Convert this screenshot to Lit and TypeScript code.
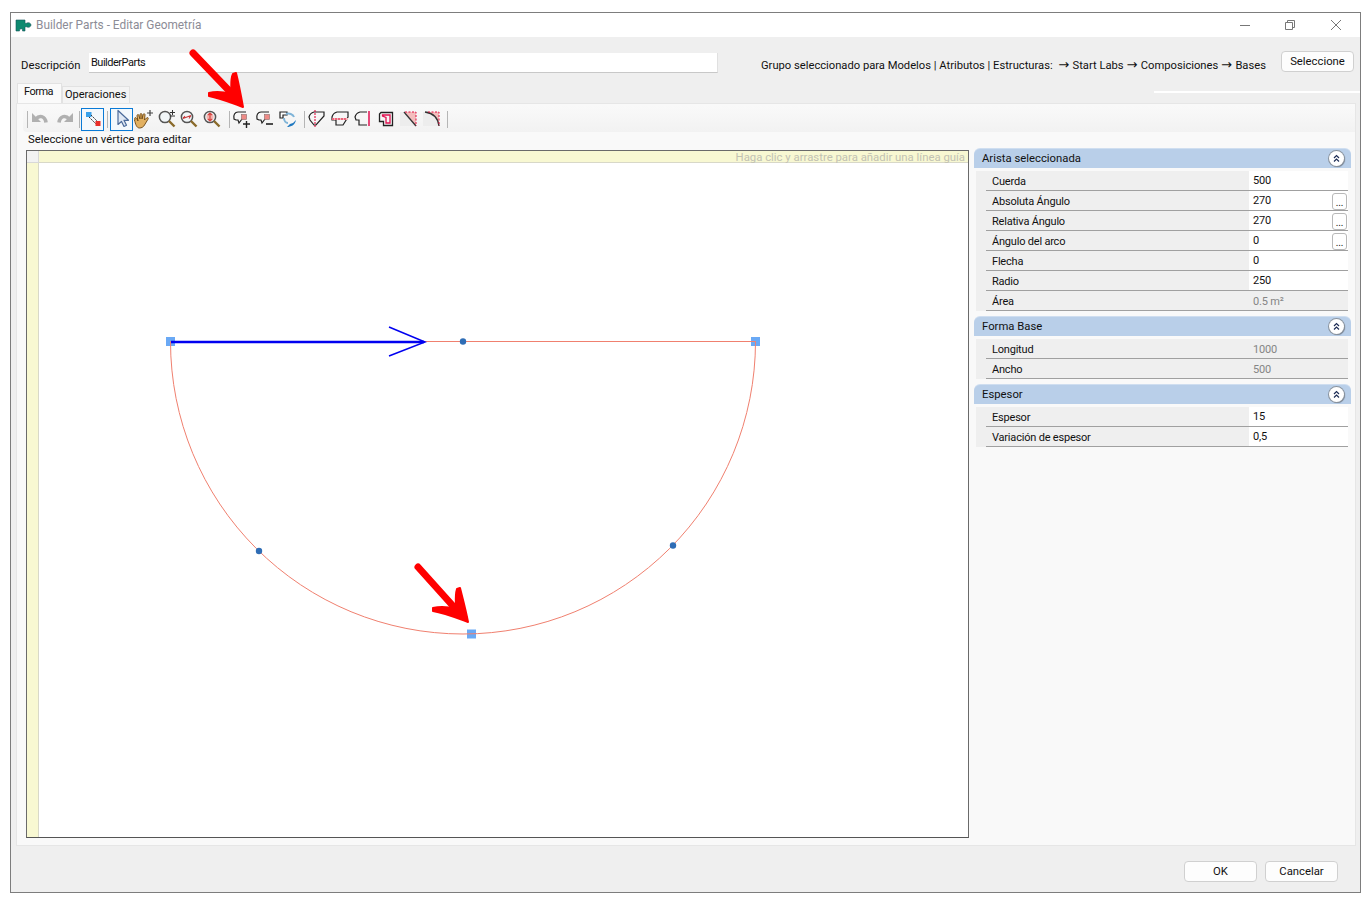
import { LitElement, html, css, svg } from "lit";
import { customElement } from "lit/decorators.js";

type Row = { label: string; value: string; readonly?: boolean; more?: boolean };
type Group = { title: string; rows: Row[] };

const groups: Group[] = [
  {
    title: "Arista seleccionada",
    rows: [
      { label: "Cuerda", value: "500" },
      { label: "Absoluta Ángulo", value: "270", more: true },
      { label: "Relativa Ángulo", value: "270", more: true },
      { label: "Ángulo del arco", value: "0", more: true },
      { label: "Flecha", value: "0" },
      { label: "Radio", value: "250" },
      { label: "Área", value: "0.5 m²", readonly: true },
    ],
  },
  {
    title: "Forma Base",
    rows: [
      { label: "Longitud", value: "1000", readonly: true },
      { label: "Ancho", value: "500", readonly: true },
    ],
  },
  {
    title: "Espesor",
    rows: [
      { label: "Espesor", value: "15" },
      { label: "Variación de espesor", value: "0,5" },
    ],
  },
];

const ico = (body: unknown) =>
  html`<svg class="ico" width="20" height="20" viewBox="0 0 20 20" fill="none">${body}</svg>`;

const undo = ico(svg`<path d="M2 4v9h9z" fill="#b0b0b0"/><path d="M6 10c3-4 9-3.500 10 3.500" stroke="#b0b0b0" stroke-width="3.600"/>`);
const redo = ico(svg`<path d="M18 4v9H9z" fill="#b0b0b0"/><path d="M14 10c-3-4-9-3.500-10 3.500" stroke="#b0b0b0" stroke-width="3.600"/>`);
const edit = ico(svg`<rect x="3" y="3" width="5.500" height="5" fill="#38a0ea"/><path d="M8 6l7 7M6 8l7 7" stroke="#333" stroke-width="1" stroke-dasharray="2 1"/><rect x="12.500" y="12" width="5" height="5" fill="#e8302c"/>`);
const pointer = ico(svg`<path d="M6 1.500v14l3.500-3 2.500 5 2.500-1.200-2.500-5h4.500z" fill="#dfe8f4" stroke="#4a6a9a" stroke-width="1.200" stroke-linejoin="round"/>`);
const hand = ico(svg`<path d="M1 11c-1-3 1-3 2-1l1 2-1-5c0-2 2-2 2 0l1 3V6c0-2 2-2 2 0v4l1-4c.5-2 2-1.500 2 0l-.5 5 2-2c1.500-1 2.500 0 1 2l-3 5c-1 2-3 3-5 3-3 0-4-4-5-8z" fill="#e2b060" stroke="#6a4412" stroke-width=".9"/><path d="M16 1v6M13 4h6" stroke="#444" stroke-width="1.200"/>`);
const glass = (inner: unknown) =>
  ico(svg`<circle cx="8" cy="8" r="5.600" fill="#f2f6f8" stroke="#555" stroke-width="1.500"/><path d="M12 12l5.500 5.500" stroke="#8a6a2a" stroke-width="2.400"/>${inner}`);
const zoomIn = glass(svg`<path d="M15.500 1v5M13 3.500h5M13 7h5" stroke="#333" stroke-width="1"/>`);
const zoomWin = glass(svg`<path d="M4 9.500l8-3M4 9.500l2-2.500M12 6.500l-2 3" stroke="#c8393a" stroke-width="1.100"/>`);
const zoomExt = glass(svg`<rect x="4.500" y="4.500" width="7" height="7" rx="3" fill="#f2b4b0"/><path d="M8 4v8M6 6l2-2 2 2M6 10l2 2 2-2" stroke="#d8433f" stroke-width="1.200"/>`);

const bubble = "M14 3H6C3 3 1 6 2 10l2 1h2l1 3 3-4";
const vSquare = svg`<rect x="9.500" y="5.500" width="5" height="5" fill="#ee8a86" stroke="#8a6a6a" stroke-width=".6"/>`;
const vAdd = ico(svg`<path d=${bubble} stroke="#222" stroke-width="1.200"/>${vSquare}<path d="M11 15h7M14.500 12v7" stroke="#222" stroke-width="1.400"/>`);
const vDel = ico(svg`<path d=${bubble} stroke="#222" stroke-width="1.200"/>${vSquare}<path d="M11 15h7" stroke="#222" stroke-width="1.600"/>`);
const vRot = ico(svg`<path d="M2 3h7v3H5v3H2z" fill="#fff" stroke="#222" stroke-width="1.200"/><path d="M8 5c3-1 7 0 8 3" stroke="#7fb4d8" stroke-width="2"/><path d="M6 9c0 3 2 5 4 5" stroke="#7fb4d8" stroke-width="2"/><path d="M9 18c4 0 8-2 9-7l-3 3-3 1z" fill="#1f78c0"/>`);
const outline = "M2 8Q3 4 7 3H17V7L9 16H7L3 11z";
const cutV = ico(svg`<path d=${outline} stroke="#222" stroke-width="1.200"/><path d="M8 1v17" stroke="#e01040" stroke-width="1.100" stroke-dasharray="2 1"/>`);
const cutH = ico(svg`<path d="M2 8Q3 4 7 3H18V8L13 16H6V11H2z" stroke="#222" stroke-width="1.200"/><rect x="2" y="9" width="16" height="2" fill="#f4b8b8"/><path d="M2 10h15" stroke="#e01040" stroke-width="1.100" stroke-dasharray="2 1"/>`);
const offset1 = ico(svg`<path d="M14 3H7Q3 4 2 8L3 11H6V16H14" stroke="#222" stroke-width="1.200"/><path d="M16 2v15" stroke="#e01050" stroke-width="1.500"/>`);
const offset2 = ico(svg`<path d="M3.500 5L5 3.500H16.500V16.500H7.500V12.500H3.500z" stroke="#222" stroke-width="1.300"/><path d="M6.500 7V6H14V14H10V8.500z" stroke="#e01050" stroke-width="1.300"/>`);
const chamfer = ico(svg`<rect x="1" y="3" width="16" height="14" fill="#ededed"/><path d="M6 3h11v14z" fill="#f4bdbd"/><path d="M5 3l12 14" stroke="#333" stroke-width="1.300"/><path d="M6 3h11v14" stroke="#e01040" stroke-dasharray="2 1.500"/>`);
const fillet = ico(svg`<rect x="1" y="3" width="16" height="14" fill="#ededed"/><path d="M3 3h14v14C16 9 11 4 3 3z" fill="#f4bdbd"/><path d="M3 3c8 1 13 6 14 14" stroke="#333" stroke-width="1.300"/><path d="M6 3h11v14" stroke="#e01040" stroke-dasharray="2 1.500"/>`);

const sep = (cls: string) => html`<i class="sep ${cls}"></i>`;
const btn = (i: unknown, cls = "") => html`<span class="tool ${cls}">${i}</span>`;

@customElement("prop-group")
export class PropGroup extends LitElement {
  static properties = { group: { attribute: false } };
  declare group: Group;

  static styles = css`
    :host {
      display: block;
      margin-bottom: 6px;
    }
    .head {
      height: 19px;
      margin-bottom: 3px;
      background: #b9cfe9;
      border-radius: 6px 6px 0 0;
      box-shadow: 0 -1px 0 #cfdef0;
      display: flex;
      align-items: center;
      justify-content: space-between;
      padding: 0 7px 0 8px;
    }
    .toggle {
      width: 15px;
      height: 15px;
      border-radius: 50%;
      background: #fff;
      box-shadow: 0 0 0 1px #8b949f, 1px 1px 1px #6a7583;
      display: block;
    }
    .toggle svg {
      display: block;
    }
    .rows {
      margin: 0 3px 0 2px;
      background: #efefef;
    }
    .row {
      height: 20px;
      padding-left: 10px;
      display: grid;
      grid-template-columns: 263px 99px;
      box-sizing: border-box;
      font-size: 11px;
      letter-spacing: -0.2px;
    }
    .cell {
      border-bottom: 1px solid #a0a0a0;
      display: flex;
      align-items: center;
      height: 20px;
      box-sizing: border-box;
    }
    .label {
      padding: 1px 0 0 6px;
      color: #111;
    }
    .val {
      background: #fff;
      padding-left: 4px;
      justify-content: space-between;
      color: #111;
      padding-bottom: 1px;
    }
    .val.ro {
      background: #efefef;
      color: #858585;
      padding: 1px 0 0 4px;
    }
    .more {
      width: 15px;
      height: 17px;
      margin: 2px 1px 0 0;
      border: 1px solid #b8b8b8;
      border-radius: 3px;
      background: #fff;
      box-sizing: border-box;
      font-size: 10px;
      line-height: 18px;
      text-align: center;
    }
  `;

  render() {
    return html`
      <div class="head">
        <span>${this.group.title}</span>
        <span class="toggle">
          <svg width="15" height="15" viewBox="0 0 15 15" fill="none">
            <path d="M5 7l2.500-2.500L10 7M5 10.500L7.500 8l2.500 2.500" stroke="#1d2c55" stroke-width="1.200" />
          </svg>
        </span>
      </div>
      <div class="rows">
        ${this.group.rows.map(
          (r) => html`
            <div class="row">
              <div class="cell label">${r.label}</div>
              <div class="cell val ${r.readonly ? "ro" : ""}">
                <span>${r.value}</span>
                ${r.more ? html`<span class="more">...</span>` : ""}
              </div>
            </div>
          `
        )}
      </div>
    `;
  }
}

@customElement("app-root")
export class AppRoot extends LitElement {
  static styles = css`
    :host {
      display: block;
      position: relative;
      width: 1369px;
      height: 905px;
      background: #fff;
      font: 11.3px Roboto, "Liberation Sans", sans-serif;
      color: #111;
      overflow: hidden;
    }
    .window {
      position: absolute;
      left: 10px;
      top: 12px;
      width: 1351px;
      height: 881px;
      box-sizing: border-box;
      border: 1px solid #7d7d7d;
      background: #efefef;
      display: flex;
      flex-direction: column;
    }
    .title {
      height: 24px;
      background: #fff;
      display: flex;
      align-items: center;
      padding-left: 4px;
      color: #8c8c96;
      flex: none;
      font-size: 11.85px;
    }
    .title .name {
      margin-left: 4px;
    }
    .winbtns {
      margin-left: auto;
      display: flex;
      gap: 25px;
      padding-right: 15px;
    }
    .winbtns svg {
      display: block;
      width: 20px;
      height: 14px;
    }
    .desc {
      height: 46px;
      flex: none;
      display: flex;
      align-items: flex-start;
      padding: 0 6px 0 10px;
    }
    .desc .lab {
      margin-top: 22px;
      width: 68px;
      flex: none;
    }
    .desc .input {
      margin-top: 16px;
      width: 629px;
      height: 20px;
      flex: none;
      box-sizing: border-box;
      background: #fff;
      border-bottom: 1px solid #c8c8c8;
      border-right: 1px solid #e0e0e0;
      padding: 3px 2px;
      font-size: 11px;
      letter-spacing: -0.5px;
    }
    .desc .path {
      margin: 22px 0 0 43px;
      white-space: nowrap;
      font-size: 11.2px;
    }
    .desc .path b {
      font: 13px "DejaVu Sans", sans-serif;
      letter-spacing: 0.7px;
      line-height: 11px;
    }
    .desc .pick {
      margin: 14px 0 0 auto;
    }
    .button {
      width: 73px;
      height: 21px;
      box-sizing: border-box;
      background: #fdfdfd;
      border: 1px solid #d0d0d0;
      border-radius: 4px;
      display: flex;
      align-items: center;
      justify-content: center;
      flex: none;
    }
    .tabs {
      height: 20px;
      flex: none;
      display: flex;
      align-items: flex-end;
      padding-left: 6px;
    }
    .tab {
      height: 17px;
      box-sizing: border-box;
      background: #f4f4f4;
      border: 1px solid #e2e2e2;
      border-bottom: 0;
      padding: 1px 3px 0 2px;
      font-size: 11px;
    }
    .tab.active {
      height: 20px;
      width: 45px;
      background: #fafafa;
      padding: 1px 0 0 6px;
      letter-spacing: -0.5px;
    }
    .tabs .shine {
      margin: 0 0 10px auto;
      width: 206px;
      height: 2px;
      background: #fff;
    }
    .panel {
      height: 743px;
      margin: 0 4px 0 5px;
      flex: none;
      box-sizing: border-box;
      background: #f9f9f9;
      border: 1px solid #e6e6e6;
      padding-top: 2px;
    }
    .toolbar {
      height: 26px;
      margin-left: 6px;
      padding-left: 3px;
      box-sizing: border-box;
      display: flex;
      align-items: center;
      background: linear-gradient(#f9f9f9, #f2f2f2);
      border-radius: 4px 0 0 4px;
    }
    .tool {
      width: 23px;
      height: 23px;
      box-sizing: border-box;
      display: flex;
      align-items: center;
      justify-content: center;
      flex: none;
    }
    .tool.on {
      border: 1px solid #0a7ad6;
      background: #f3f8fc;
    }
    .tool.tight {
      width: 22.5px;
    }
    .tool.gap {
      margin-left: 2px;
    }
    .ico {
      display: block;
      flex: none;
    }
    .sep {
      width: 1px;
      height: 17px;
      background: #b5b5b5;
      flex: none;
    }
    .s0 {
      margin: 0 0 0 1px;
    }
    .s1 {
      margin: 0 1px 0 3px;
    }
    .s2 {
      margin: 0 2px 0 3px;
    }
    .s3 {
      margin: 0 0.5px 0 6px;
    }
    .s4 {
      margin: 0 0.5px 0 4.5px;
    }
    .s5 {
      margin: 0 0 0 3.5px;
    }
    .hint {
      height: 18px;
      padding-left: 11px;
      line-height: 15px;
      box-sizing: border-box;
    }
    .main {
      display: flex;
      align-items: flex-start;
      gap: 5px;
      margin-left: 9px;
    }
    .canvas {
      position: relative;
      width: 943px;
      height: 688px;
      box-sizing: border-box;
      background: #fff;
      border: 1px solid #6a6a6a;
      border-bottom-color: #555;
      flex: none;
    }
    .ruler-top {
      height: 12px;
      box-sizing: border-box;
      background: #f8f8d2;
      border-bottom: 1px solid #d8d8c8;
      color: #c2c2b2;
      text-align: right;
      padding-right: 3px;
      line-height: 12px;
      font-size: 11.35px;
      white-space: nowrap;
    }
    .ruler-left {
      position: absolute;
      left: 0;
      top: 0;
      bottom: 0;
      width: 12px;
      box-sizing: border-box;
      background: #f8f8d2;
      border-right: 1px solid #d8d8c8;
    }
    .ruler-corner {
      position: absolute;
      left: 0;
      top: 0;
      width: 12px;
      height: 12px;
      box-sizing: border-box;
      background: #f2f2f2;
      border: solid #d8d8d8;
      border-width: 0 1px 1px 0;
    }
    .canvas svg {
      position: absolute;
      left: -1px;
      top: -1px;
    }
    .side {
      width: 377px;
      margin-top: -1px;
      flex: none;
    }
    .footer {
      flex: 1;
      display: flex;
      justify-content: flex-end;
      gap: 8px;
      padding: 15px 22px 0 0;
    }
    .overlay {
      position: absolute;
      left: 0;
      top: 0;
      pointer-events: none;
    }
  `;

  render() {
    return html`
      <div class="window">
        <div class="title">
          <svg width="17" height="13" viewBox="0 0 17 13">
            <path d="M1 1h9v2.500c0 1 1 1 2 .5 2-1 4 .5 4 2s-2 3-4 2c-1-.5-2-.5-2 .5V12H7.500c1-3-3.500-3-3 0H1z" fill="#0e8a70" stroke="#14545a" stroke-width=".6" />
          </svg>
          <span class="name">Builder Parts - Editar Geometría</span>
          <div class="winbtns">
            <svg viewBox="0 0 20 14"><path d="M5 7.500h10" stroke="#777" /></svg>
            <svg viewBox="0 0 20 14" fill="none"><path d="M5.500 4.500h7v7h-7zM7.500 4.500v-2h7v7h-2" stroke="#777" /></svg>
            <svg viewBox="0 0 20 14" fill="none"><path d="M6 2l10 10M16 2L6 12" stroke="#777" /></svg>
          </div>
        </div>
        <div class="desc">
          <span class="lab">Descripción</span>
          <div class="input">BuilderParts</div>
          <span class="path">Grupo seleccionado para Modelos | Atributos | Estructuras:&nbsp; <b>→</b> Start Labs <b>→</b> Composiciones <b>→</b> Bases</span>
          <div class="button pick">Seleccione</div>
        </div>
        <div class="tabs">
          <div class="tab active">Forma</div>
          <div class="tab">Operaciones</div>
          <div class="shine"></div>
        </div>
        <div class="panel">
          <div class="toolbar">
            ${sep("s0")}${btn(undo)}${btn(redo, "gap")}${sep("s1")}${btn(edit, "on")}${sep("s2")}${btn(pointer, "on")}
            ${btn(hand, "tight")}${btn(zoomIn, "tight")}${btn(zoomWin, "tight")}${btn(zoomExt, "tight")}${sep("s3")}
            ${btn(vAdd)}${btn(vDel)}${btn(vRot)}${sep("s4")}
            ${btn(cutV)}${btn(cutH)}${btn(offset1)}${btn(offset2)}${btn(chamfer)}${btn(fillet)}${sep("s5")}
          </div>
          <div class="hint">Seleccione un vértice para editar</div>
          <div class="main">
            <div class="canvas">
              <div class="ruler-top">Haga clic y arrastre para añadir una línea guía</div>
              <div class="ruler-left"></div>
              <div class="ruler-corner"></div>
              ${this.drawing()}
            </div>
            <div class="side">
              ${groups.map((g) => html`<prop-group .group=${g}></prop-group>`)}
            </div>
          </div>
        </div>
        <div class="footer">
          <div class="button">OK</div>
          <div class="button">Cancelar</div>
        </div>
      </div>
      <svg class="overlay" width="1369" height="905" viewBox="0 0 1369 905">
        <path d="M193 53L238 100" stroke="#f00" stroke-width="7" stroke-linecap="round" />
        <path d="M243 107C232 103 220 98 209 96L209 93C216 91 224 92 231 94C232 88 230 80 233 74L236 73C239 85 241 96 243 107z" fill="#f00" stroke="#f00" stroke-width="2" stroke-linejoin="round" />
        <path d="M418 567L462 616" stroke="#f00" stroke-width="7" stroke-linecap="round" />
        <path d="M468 622C457 618 445 613 433 611L433 608C441 606 449 607 456 609C456 603 455 595 457 589L460 588C463 600 466 611 468 622z" fill="#f00" stroke="#f00" stroke-width="2" stroke-linejoin="round" />
      </svg>
    `;
  }

  // x/y below are page coordinates minus the canvas origin
  drawing() {
    const ox = 26;
    const oy = 150;
    const handle = (x: number, y: number) =>
      svg`<rect x=${x - ox - 4.5} y=${y - oy - 4.5} width="9" height="9" fill="#6aa9f5" />`;
    const dot = (x: number, y: number) =>
      svg`<circle cx=${x - ox} cy=${y - oy} r="3.200" fill="#2f6db5" />`;
    return html`<svg width="943" height="688" viewBox="0 0 943 688" fill="none">
      ${handle(170.5, 341.5)}${handle(755.5, 341.5)}${handle(471.5, 634)}
      <path d="M${170.5 - ox} ${341.5 - oy}A292.500 292.500 0 0 0 ${755.5 - ox} ${341.5 - oy}" stroke="#f0806f" stroke-width="1" />
      <path d="M${170.5 - ox} ${341.5 - oy}H${755.5 - ox}" stroke="#f0806f" stroke-width="1" />
      ${dot(463, 341.5)}${dot(259, 551)}${dot(673, 545.5)}
      <path d="M${171 - ox} ${342 - oy}H${424 - ox}" stroke="#0000f0" stroke-width="2.500" />
      <path d="M${389 - ox} ${327 - oy}L${425 - ox} ${342 - oy}L${389 - ox} ${356 - oy}" stroke="#0000f0" stroke-width="1.500" />
    </svg>`;
  }
}
